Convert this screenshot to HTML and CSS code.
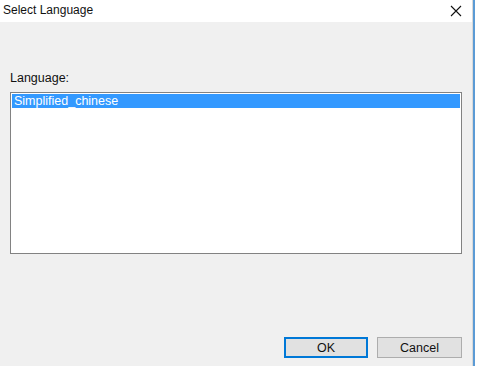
FILE: index.html
```html
<!DOCTYPE html>
<html lang="en">
<head>
    <meta charset="UTF-8">
    <title>Select Language</title>
    <link rel="stylesheet" href="styles.css">
</head>
<body>
    <div class="frame">
        <div class="dialog">
            <div class="title-bar">
                <span class="title">Select Language</span>
                <svg class="close" width="12" height="12" viewBox="0 0 12 12">
                    <path d="M1 1 L11 11 M11 1 L1 11" stroke="#111" stroke-width="1.1" fill="none"/>
                </svg>
            </div>
            <div class="content">
                <label class="field-label">Language:</label>
                <div class="listbox">
                    <div class="list-item selected">Simplified_chinese</div>
                </div>
                <div class="buttons">
                    <button class="btn default">OK</button>
                    <button class="btn">Cancel</button>
                </div>
            </div>
        </div>
    </div>
</body>
</html>
```

FILE: styles.css
```css
* {
    box-sizing: border-box;
    margin: 0;
    padding: 0;
}

body {
    background: white;
    font-family: "Liberation Sans", Arial, sans-serif;
    font-size: 12.5px;
    color: black;
    width: 477px;
    height: 366px;
    overflow: hidden;
}

.frame {
    width: 475px;
    height: 366px;
    border-right: 2px solid #5b9bd5;
}

.dialog {
    width: 473px;
    height: 366px;
    border-right: 1px solid #d9d9d9;
    display: flex;
    flex-direction: column;
}

.title-bar {
    height: 22px;
    background: white;
    display: flex;
    align-items: center;
    justify-content: space-between;
    padding: 0 7px 2px 3px;
}

.title {
    font-family: "Liberation Sans", Arial, sans-serif;
    font-size: 12px;
    color: #111;
}

.close {
    margin-right: 3px;
    margin-top: 1px;
}

.content {
    flex: 1;
    background: #f0f0f0;
    padding: 49px 10px 0 10px;
    display: flex;
    flex-direction: column;
}

.field-label {
    line-height: 14px;
    height: 14px;
    margin-bottom: 7px;
    color: #111;
}

.listbox {
    width: 452px;
    height: 162px;
    border: 1px solid #828282;
    background: white;
    padding: 1px 1px 0 1px;
}

.list-item {
    height: 14px;
    line-height: 14px;
    padding-left: 2px;
}

.list-item.selected {
    background: #3399ff;
    color: white;
}

.buttons {
    display: flex;
    justify-content: flex-end;
    gap: 9px;
    margin-top: 83px;
}

.btn {
    width: 85px;
    height: 21px;
    background: #e1e1e1;
    border: 1px solid #adadad;
    font-family: "Liberation Sans", Arial, sans-serif;
    font-size: 12.5px;
    color: #111;
}

.btn.default {
    width: 84px;
    border: 2px solid #0078d7;
}
```
